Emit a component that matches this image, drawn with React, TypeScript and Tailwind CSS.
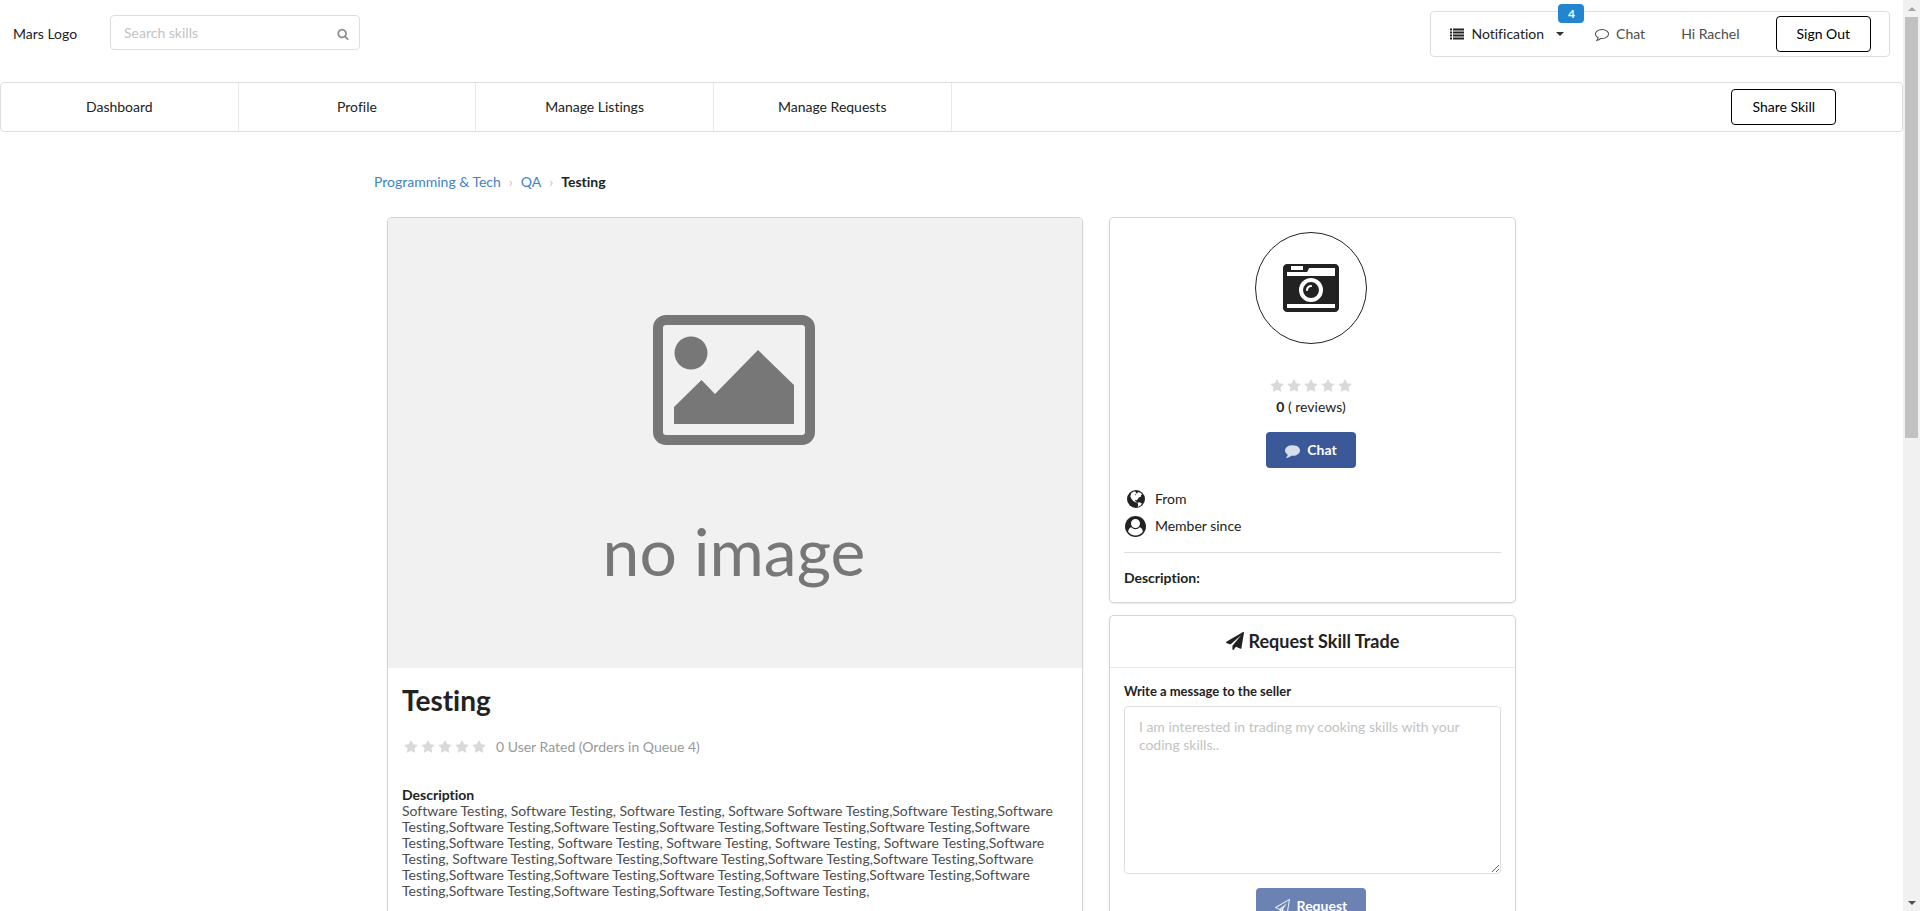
import React from "react";

const paths = {
  search:
    "M1216 832q0-185-131.5-316.5t-316.5-131.5-316.5 131.5-131.5 316.5 131.5 316.5 316.5 131.5 316.5-131.5 131.5-316.5zm512 832q0 52-38 90t-90 38q-54 0-90-38l-343-342q-179 124-399 124-143 0-273.5-55.5t-225-150-150-225-55.5-273.5 55.5-273.5 150-225 225-150 273.5-55.5 273.5 55.5 225 150 150 225 55.5 273.5q0 220-124 399l343 343q37 37 37 90z",
  list: "M0 192h256v256h-256zM384 192h1408v256h-1408zM0 576h256v256h-256zM384 576h1408v256h-1408zM0 960h256v256h-256zM384 960h1408v256h-1408zM0 1344h256v256h-256zM384 1344h1408v256h-1408z",
  commentOutline:
    "M896 384q-204 0-381.5 69.5t-282 187.5-104.5 255q0 112 71.5 213.5t201.5 175.5l87 50-27 96q-24 91-70 172 152-63 275-171l43-38 57 6q69 8 130 8 204 0 381.5-69.5t282-187.5 104.5-255-104.5-255-282-187.5-381.5-69.5zm896 512q0 174-120 321.5t-326 233-450 85.5q-70 0-145-8-198 175-460 242-49 14-114 22h-5q-15 0-27-10.5t-16-27.5v-1q-3-4-.5-12t2-10 4.5-9.5l6-9 7-8.5 8-9q7-8 31-34.5t34.5-38 31-39.5 32.5-51 27-59 26-76q-157-89-247.5-220t-90.5-281q0-130 71-248.5t191-204.5 286-136.5 348-50.5 348 50.5 286 136.5 191 204.5 71 248.5z",
  comment:
    "M1792 896q0 174-120 321.5t-326 233-450 85.5q-70 0-145-8-198 175-460 242-49 14-114 22-17 2-30.5-9t-17.5-29v-1q-3-4-.5-12t2-10 4.5-9.5l6-9 7-8.5 8-9q7-8 31-34.5t34.5-38 31-39.5 32.5-51 27-59 26-76q-157-89-247.5-220t-90.5-281q0-130 71-248.5t191-204.5 286-136.5 348-50.5q244 0 450 85.5t326 233 120 321.5z",
  star: "M1728 647q0 22-26 48l-363 354 86 500q1 7 1 20 0 21-10.5 35.5t-30.5 14.5q-19 0-40-12l-449-236-449 236q-22 12-40 12-21 0-31.5-14.5t-10.5-35.5q0-6 2-20l86-500-364-354q-25-27-25-48 0-37 56-46l502-73 225-455q19-41 49-41t49 41l225 455 502 73q56 9 56 46z",
  camera:
    "M928 832q0-14-9-23t-23-9q-66 0-113 47t-47 113q0 14 9 23t23 9 23-9 9-23q0-40 28-68t68-28q14 0 23-9t9-23zm224 130q0 106-75 181t-181 75-181-75-75-181 75-181 181-75 181 75 75 181zm-1024 574h1536v-128h-1536v128zm1152-574q0-159-112.5-271.5t-271.5-112.5-271.5 112.5-112.5 271.5 112.5 271.5 271.5 112.5 271.5-112.5 112.5-271.5zm-1024-642h384v-128h-384v128zm-128 192h1536v-256h-828l-64 128h-644v128zm1664-256v1280q0 53-37.5 90.5t-90.5 37.5h-1536q-53 0-90.5-37.5t-37.5-90.5v-1280q0-53 37.5-90.5t90.5-37.5h1536q53 0 90.5 37.5t37.5 90.5z",
  user: "M1523 1339q-22-155-87.5-257.5t-184.5-118.5q-67 74-159.5 115.5t-195.5 41.5-195.5-41.5-159.5-115.5q-119 16-184.5 118.5t-87.5 257.5q106 150 271 237.5t356 87.5 356-87.5 271-237.5zm-243-699q0-159-112.5-271.5t-271.5-112.5-271.5 112.5-112.5 271.5 112.5 271.5 271.5 112.5 271.5-112.5 112.5-271.5zm512 256q0 182-71 347.5t-190.5 286-285.5 191.5-349 71q-182 0-348-71t-286-191-191-286-71-348 71-348 191-286 286-191 348-71 348 71 286 191 191 286 71 348z",
  plane:
    "M1764 11q33 24 27 64l-256 1536q-5 29-32 45-14 8-31 8-11 0-24-5l-453-185-242 295q-18 23-49 23-13 0-22-4-19-7-30.5-23.5t-11.5-36.5v-349l864-1059-1069 925-395-162q-37-14-40-55-2-40 32-59l1664-960q15-9 32-9 20 0 36 11z",
  planeOutline:
    "M1764 11q33 24 27 64l-256 1536q-5 29-32 45-14 8-31 8-11 0-24-5l-527-215-298 327q-18 21-47 21-14 0-23-4-19-7-30-23.5t-11-36.5v-452l-472-193q-37-14-40-55-3-39 32-59l1664-960q35-21 68 2zm-342 1499l221-1323-1434 827 336 137 863-639-478 797z",
};

function Icon({ name, className }: { name: keyof typeof paths; className: string }) {
  return (
    <svg viewBox="0 0 1792 1792" fill="currentColor" aria-hidden="true" className={className}>
      <path d={paths[name]} />
    </svg>
  );
}

function Globe() {
  return (
    <svg viewBox="0 0 18 18" aria-hidden="true" className="size-[18px]">
      <circle cx="9" cy="9" r="9" fill="currentColor" />
      <path
        fill="#fff"
        d="M4.200 3.200 6.500 1.600 9 1.800 8.600 3 10.200 3.400 11 2 13.600 2.700 15.300 4.600 13.800 5.200 14.200 6.400 12.200 7.300 10.800 8.900 9.900 10.300 8.300 9.900 7.800 11 9.200 11.400 9.800 12.600 8.400 12.200 6.200 11 4.400 8.800 3.300 6.400ZM10.400 12.700 12.400 12.200 14.900 13.400 13.900 15.300 11.800 16.600 10.700 16.700 11.200 14.800Z"
      />
      <path fill="currentColor" d="M7.600 4.300 9.400 4.600 8.600 5.600Z" />
    </svg>
  );
}

function Stars() {
  return (
    <div className="flex gap-[3px] text-[#d9d9d9]">
      {[1, 2, 3, 4, 5].map((n) => (
        <Icon key={n} name="star" className="size-3.5" />
      ))}
    </div>
  );
}

const card = "rounded bg-white shadow-[0_1px_3px_0_#d4d4d5,0_0_0_1px_#d4d4d5]";
const outlined = "h-9 rounded border border-black bg-white px-5 text-black";

function Header() {
  return (
    <header className="flex items-start justify-between">
      <div className="flex items-center pl-[13px] pt-[15px]">
        <span className="w-[97px] pt-0.5">Mars Logo</span>
        <div className="relative">
          <input
            type="text"
            aria-label="Search skills"
            placeholder="Search skills"
            className="h-[35px] w-[250px] rounded border border-[#dededf] pb-px pl-[13px] pr-9 outline-none placeholder:text-[#c3c3c3]"
          />
          <button type="button" aria-label="Search" className="absolute right-[11px] top-[13px] text-[#8c8c8c]">
            <Icon name="search" className="size-3" />
          </button>
        </div>
      </div>
      <nav className="relative mr-[13px] mt-[11px] flex h-[46px] items-center rounded border border-[#dededf] pl-[19px] pr-[18px] text-[#4c4c4c]">
        <button type="button" className="flex items-center text-[#222]">
          <Icon name="list" className="mr-[7px] size-3.5" />
          Notification
          <span className="ml-3 border-x-4 border-t-4 border-x-transparent border-t-[#333]" />
        </button>
        <span className="absolute left-[127px] top-[-8px] flex h-[19px] w-[26px] items-center justify-center rounded bg-[#2185d0] text-xs font-bold text-white">
          4
        </span>
        <a href="#chat" className="ml-[31px] flex items-center">
          <Icon name="commentOutline" className="mr-[7px] size-3.5" />
          Chat
        </a>
        <span className="mx-9">Hi Rachel</span>
        <button type="button" className={outlined}>
          Sign Out
        </button>
      </nav>
    </header>
  );
}

function Tabs() {
  return (
    <nav className="mt-[25px] flex h-[50px] items-stretch rounded border border-[#dededf]">
      {["Dashboard", "Profile", "Manage Listings", "Manage Requests"].map((label) => (
        <a
          key={label}
          href={"#" + label}
          className="flex w-1/8 items-center justify-center border-r border-[#e8e8e9] text-[#222]"
        >
          {label}
        </a>
      ))}
      <div className="ml-auto mr-[66px] flex items-center">
        <button type="button" className={outlined}>
          Share Skill
        </button>
      </div>
    </nav>
  );
}

function Placeholder() {
  return (
    <div className="flex h-[450px] flex-col items-center rounded-t bg-[#f1f1f1] pr-0.5 pt-[97px]">
      <svg viewBox="0 0 162 130" className="h-[130px] w-[162px]" aria-hidden="true">
        <rect x="5" y="5" width="152" height="120" rx="8" fill="none" stroke="#777" strokeWidth="10" />
        <circle cx="38" cy="38" r="16.5" fill="#777" />
        <path d="M21 92 48.500 65 62 79 105 35 141 70V109H21Z" fill="#777" />
      </svg>
      <span className="mt-[68px] text-[66px] leading-[76px] text-[#777]">no image</span>
    </div>
  );
}

function Listing() {
  return (
    <section className={card + " h-full pb-24"}>
      <Placeholder />
      <div className="px-[14px] pt-[14px]">
        <h1 className="text-[28px] font-bold leading-9">Testing</h1>
        <div className="mt-[19px] flex items-center gap-2.5 pl-0.5 text-[#999]">
          <Stars />
          <span>0 User Rated (Orders in Queue 4)</span>
        </div>
        <h2 className="mt-[30px] font-bold leading-4">Description</h2>
        <p className="leading-4 text-[#4d4d4d]">
          Software Testing, Software Testing, Software Testing, Software Software Testing,Software
          Testing,Software Testing,Software Testing,Software Testing,Software Testing,Software
          Testing,Software Testing,Software Testing,Software Testing, Software Testing, Software
          Testing, Software Testing, Software Testing,Software Testing, Software Testing,Software
          Testing,Software Testing,Software Testing,Software Testing,Software Testing,Software
          Testing,Software Testing,Software Testing,Software Testing,Software Testing,Software
          Testing,Software Testing,Software Testing,Software Testing,Software Testing,
        </p>
      </div>
    </section>
  );
}

function Seller() {
  return (
    <section className={card + " p-[14px]"}>
      <div className="flex flex-col items-center pr-[3px]">
        <div className="flex size-28 items-center justify-center rounded-full border border-[#222]">
          <Icon name="camera" className="size-14" />
        </div>
        <div className="mt-[35px]">
          <Stars />
        </div>
        <p className="mt-1">
          <b>0</b> ( reviews)
        </p>
        <button
          type="button"
          className="mt-[15px] flex h-9 items-center rounded bg-[#3b5998] px-[19px] font-bold text-white"
        >
          <Icon name="comment" className="mr-[7px] size-[15px] opacity-80" />
          Chat
        </button>
      </div>
      <ul className="mt-5 flex flex-col gap-[5px]">
        <li className="flex h-[22px] items-center">
          <span className="mr-[7px] flex w-6 justify-center">
            <Globe />
          </span>
          From
        </li>
        <li className="flex h-[22px] items-center">
          <span className="mr-[7px] flex w-6 justify-center">
            <Icon name="user" className="size-[21px]" />
          </span>
          Member since
        </li>
      </ul>
      <div className="mt-[15px] border-t border-[#dededf] pt-[15px] font-bold">Description:</div>
    </section>
  );
}

function Trade() {
  return (
    <section className={card + " pb-6"}>
      <h2 className="flex h-[52px] items-center justify-center gap-[5px] border-b border-[#e8e8e9] pb-px text-lg font-bold">
        <Icon name="plane" className="size-[18px]" />
        Request Skill Trade
      </h2>
      <div className="flex flex-col px-[14px] pt-[13px]">
        <label htmlFor="message" className="text-[13px] font-bold leading-5">
          Write a message to the seller
        </label>
        <textarea
          id="message"
          placeholder="I am interested in trading my cooking skills with your coding skills.."
          className="mt-[5px] h-[168px] resize-y rounded border border-[#dededf] px-[14px] py-[11px] leading-[18px] outline-none placeholder:text-[#c3c3c3]"
        />
        <div className="mt-[14px] flex justify-center pr-[3px]">
          <button
            type="button"
            className="flex h-9 items-center rounded bg-[#6c82b2] px-[19px] font-bold text-white"
          >
            <Icon name="planeOutline" className="mr-[7px] size-[15px] opacity-80" />
            Request
          </button>
        </div>
      </div>
    </section>
  );
}

function ScrollTrack() {
  return (
    <div aria-hidden="true" className="flex w-[17px] shrink-0 flex-col items-center bg-[#f1f1f1]">
      <div className="flex h-[17px] items-center">
        <span className="border-x-4 border-b-4 border-x-transparent border-b-[#a3a3a3]" />
      </div>
      <div className="w-full flex-1 px-0.5">
        <div className="h-[48%] bg-[#c1c1c1]" />
      </div>
      <div className="flex h-[17px] items-center">
        <span className="border-x-4 border-t-4 border-x-transparent border-t-[#505050]" />
      </div>
    </div>
  );
}

export default function App() {
  return (
    <div className="flex h-screen bg-white font-[Lato,sans-serif] text-sm text-[#222] [font-variant-ligatures:none]">
      <div className="min-w-0 flex-1 overflow-y-auto [scrollbar-width:none]">
        <Header />
        <Tabs />
        <main className="mx-auto max-w-[1155px]">
          <nav aria-label="Breadcrumb" className="mt-10 flex items-center text-[#4183c4]">
            <a href="#tech">Programming &amp; Tech</a>
            <span className="mx-2 text-[#c3c3c3]">›</span>
            <a href="#qa">QA</a>
            <span className="mx-2 text-[#c3c3c3]">›</span>
            <b className="text-[#222]">Testing</b>
          </nav>
          <div className="mt-[26px] grid grid-cols-[5fr_3fr]">
            <div className="px-[14px]">
              <Listing />
            </div>
            <div className="flex flex-col gap-[14px] px-[14px]">
              <Seller />
              <Trade />
            </div>
          </div>
        </main>
      </div>
      <ScrollTrack />
    </div>
  );
}
